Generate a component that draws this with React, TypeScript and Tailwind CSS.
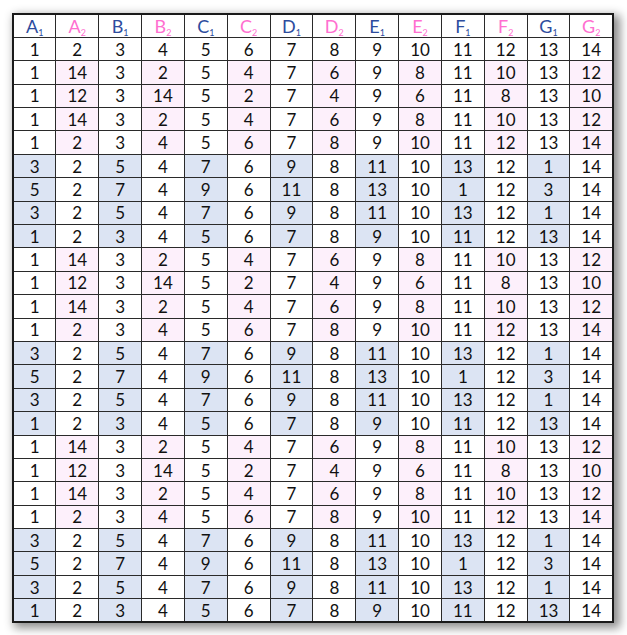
import React from "react";

const T = [1, 2, 3, 4, 5, 6, 7, 8, 9, 10, 11, 12, 13, 14];
const P1 = [1, 14, 3, 2, 5, 4, 7, 6, 9, 8, 11, 10, 13, 12];
const P2 = [1, 12, 3, 14, 5, 2, 7, 4, 9, 6, 11, 8, 13, 10];
const B1 = [3, 2, 5, 4, 7, 6, 9, 8, 11, 10, 13, 12, 1, 14];
const B2 = [5, 2, 7, 4, 9, 6, 11, 8, 13, 10, 1, 12, 3, 14];

type Row = { v: number[]; hl: "none" | "pink" | "blue" };

const pinkGroup: Row[] = [P1, P2, P1, T].map((v) => ({ v, hl: "pink" }));
const blueGroup: Row[] = [B1, B2, B1, T].map((v) => ({ v, hl: "blue" }));

const rows: Row[] = [
  { v: T, hl: "none" },
  ...pinkGroup,
  ...blueGroup,
  ...pinkGroup,
  ...blueGroup,
  ...pinkGroup,
  ...blueGroup,
];

const letters = ["A", "B", "C", "D", "E", "F", "G"];

export default function App() {
  return (
    <div className="w-[627px] h-[635px] bg-white pl-[12px] pt-[13px]" style={{ fontFamily: "Lato, 'Open Sans', sans-serif" }}>
      <div className="w-[602px] h-[609px] shadow-[4px_4px_9px_2px_rgba(0,0,0,0.45)]">
        <table className="w-full h-full table-fixed border-collapse border-2 border-[#1a1a1a] bg-white">
          <thead>
            <tr className="h-[23.4px]">
              {letters.flatMap((l) => [1, 2].map((n) => (
                <th key={l + n} className={`border border-[#2a2a2a] p-0 font-normal text-[18px] leading-none ${n === 1 ? "text-[#2d4c9e]" : "text-[#ff6fd0]"}`}>
                  {l}<sub className="text-[9px] align-[-1px]">{n}</sub>
                </th>
              )))}
            </tr>
          </thead>
          <tbody>
            {rows.map((r, i) => (
              <tr key={i} className="h-[23.4px]">
                {r.v.map((n, j) => {
                  const odd = j % 2 === 0;
                  let bg = "bg-white";
                  if (r.hl === "pink" && !odd) bg = "bg-[#fdf0fb]";
                  if (r.hl === "blue" && odd) bg = "bg-[#dce4f3]";
                  return (
                    <td key={j} className={`border border-[#2a2a2a] p-0 text-center text-[17px] leading-none text-[#111] ${bg}`}>
                      {n}
                    </td>
                  );
                })}
              </tr>
            ))}
          </tbody>
        </table>
      </div>
    </div>
  );
}
